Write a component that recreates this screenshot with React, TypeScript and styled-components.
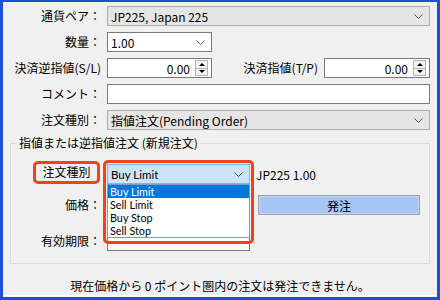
import styled, { createGlobalStyle } from 'styled-components';

const GlobalStyle = createGlobalStyle`
  html, body {
    margin: 0;
    padding: 0;
    background: #ffffff;
  }
  body {
    font-family: "Noto Sans CJK JP", "Noto Sans", sans-serif;
    font-size: 12px;
    color: #000;
  }
`;

const orderTypes = ['Buy Limit', 'Sell Limit', 'Buy Stop', 'Sell Stop'];

function Chevron() {
  return (
    <svg width="9" height="5" viewBox="0 0 9 5">
      <polyline points="0.5,0.5 4.5,4.5 8.5,0.5" fill="none" stroke="#5c5c5c" strokeWidth="1" />
    </svg>
  );
}

function SpinBox({ value, width }: { value: string; width: number }) {
  return (
    <StyledSpinBox $width={width}>
      <span>{value}</span>
      <StyledSpinButtons>
        <StyledSpinHalf>
          <StyledArrowUp />
        </StyledSpinHalf>
        <StyledSpinHalf>
          <StyledArrowDown />
        </StyledSpinHalf>
      </StyledSpinButtons>
    </StyledSpinBox>
  );
}

function App() {
  return (
    <>
      <GlobalStyle />
      <StyledWindow>
        <StyledForm>
          <StyledRow>
            <StyledLabel>通貨ペア：</StyledLabel>
            <StyledCombo $width={323} $readOnly>
              <span>JP225, Japan 225</span>
              <Chevron />
            </StyledCombo>
          </StyledRow>
          <StyledRow>
            <StyledLabel>数量：</StyledLabel>
            <StyledCombo $width={105}>
              <span>1.00</span>
              <Chevron />
            </StyledCombo>
          </StyledRow>
          <StyledRow>
            <StyledLabel>決済逆指値(S/L)</StyledLabel>
            <SpinBox value="0.00" width={105} />
            <StyledLabel $width={100}>決済指値(T/P)</StyledLabel>
            <SpinBox value="0.00" width={106} />
          </StyledRow>
          <StyledRow>
            <StyledLabel>コメント：</StyledLabel>
            <StyledField $width={323} />
          </StyledRow>
          <StyledRow>
            <StyledLabel>注文種別：</StyledLabel>
            <StyledCombo $width={323} $readOnly>
              <span>指値注文(Pending Order)</span>
              <Chevron />
            </StyledCombo>
          </StyledRow>
        </StyledForm>

        <StyledGroup>
          <StyledLegend>指値または逆指値注文 (新規注文)</StyledLegend>
          <StyledGroupRows>
            <StyledRow>
              <StyledLabel $width={90}>
                <StyledHighlight>注文種別</StyledHighlight>
              </StyledLabel>
              <StyledComboAnchor>
                <StyledCombo $width={143} $open>
                  <span>Buy Limit</span>
                  <Chevron />
                </StyledCombo>
                <StyledDropList>
                  {orderTypes.map((type, i) => (
                    <StyledDropItem key={type} $selected={i === 0}>
                      {type}
                    </StyledDropItem>
                  ))}
                </StyledDropList>
                <StyledAnnotation />
              </StyledComboAnchor>
              <StyledInfo>JP225 1.00</StyledInfo>
            </StyledRow>
            <StyledRow>
              <StyledLabel $width={90}>価格：</StyledLabel>
              <StyledField $width={143} />
              <StyledOrderButton>発注</StyledOrderButton>
            </StyledRow>
            <StyledRow $offset={5}>
              <StyledLabel $width={90}>有効期限：</StyledLabel>
              <StyledField $width={143} />
            </StyledRow>
          </StyledGroupRows>
        </StyledGroup>

        <StyledNote>現在価格から 0 ポイント圏内の注文は発注できません。</StyledNote>
      </StyledWindow>
    </>
  );
}

const StyledWindow = styled.div`
  width: 440px;
  height: 300px;
  box-sizing: border-box;
  border-style: solid;
  border-color: #1f4fd6;
  border-width: 2px 3px 3px 3px;
  background-color: #f0f0f0;
  box-shadow: inset 0 -2px 0 #ffffff;
  display: flex;
  flex-direction: column;
`;

const StyledForm = styled.div`
  display: flex;
  flex-direction: column;
  gap: 6px;
  padding-top: 4px;
`;

const StyledRow = styled.div<{ $offset?: number }>`
  display: flex;
  align-items: center;
  gap: 6px;
  height: 20px;
  margin-top: ${({ $offset }) => $offset ?? 0}px;
`;

const StyledLabel = styled.div<{ $width?: number }>`
  width: ${({ $width }) => $width ?? 98}px;
  flex-shrink: 0;
  display: flex;
  justify-content: flex-end;
  align-items: center;
  white-space: nowrap;
  line-height: 16px;
`;

const StyledField = styled.div<{ $width: number }>`
  width: ${({ $width }) => $width}px;
  height: 20px;
  box-sizing: border-box;
  flex-shrink: 0;
  border: 1px solid #7a7a7a;
  background-color: #ffffff;
`;

const StyledCombo = styled.div<{ $width: number; $readOnly?: boolean; $open?: boolean }>`
  width: ${({ $width }) => $width}px;
  height: 20px;
  box-sizing: border-box;
  flex-shrink: 0;
  display: flex;
  align-items: center;
  justify-content: space-between;
  padding: 0 6px 0 3px;
  font-family: ${({ $open }) =>
    $open ? 'Lato, "Noto Sans", sans-serif' : '"Noto Sans CJK JP", "Noto Sans", sans-serif'};
  font-size: ${({ $open }) => ($open ? 11.5 : 12)}px;
  border: 1px solid
    ${({ $readOnly, $open }) => ($open ? '#7eb4ea' : $readOnly ? '#adadad' : '#7a7a7a')};
  background-color: ${({ $readOnly, $open }) =>
    $open ? '#cce4f7' : $readOnly ? '#e5e5e5' : '#ffffff'};
  white-space: nowrap;
`;

const StyledSpinBox = styled.div<{ $width: number }>`
  width: ${({ $width }) => $width}px;
  height: 20px;
  box-sizing: border-box;
  flex-shrink: 0;
  display: flex;
  align-items: center;
  justify-content: flex-end;
  gap: 5px;
  padding-right: 3px;
  border: 1px solid #7a7a7a;
  background-color: #ffffff;
`;

const StyledSpinButtons = styled.div`
  width: 13px;
  height: 16px;
  box-sizing: border-box;
  border: 1px solid #b4b4b4;
  display: flex;
  flex-direction: column;
  background-color: #f2f2f2;
`;

const StyledSpinHalf = styled.div`
  flex: 1;
  display: flex;
  align-items: center;
  justify-content: center;
  & + & {
    border-top: 1px solid #b4b4b4;
  }
`;

const StyledArrowUp = styled.div`
  width: 0;
  height: 0;
  border-left: 3px solid transparent;
  border-right: 3px solid transparent;
  border-bottom: 3px solid #000;
`;

const StyledArrowDown = styled.div`
  width: 0;
  height: 0;
  border-left: 3px solid transparent;
  border-right: 3px solid transparent;
  border-top: 3px solid #000;
`;

const StyledGroup = styled.fieldset`
  margin: 5px 7px 0 7px;
  padding: 0 0 12px 0;
  border: 1px solid #dcdcdc;
  min-width: 0;
`;

const StyledLegend = styled.legend`
  margin-left: 6px;
  padding: 0 2px;
  line-height: 16px;
`;

const StyledGroupRows = styled.div`
  display: flex;
  flex-direction: column;
  gap: 11px;
  padding-top: 13px;
`;

const StyledHighlight = styled.span`
  width: 67px;
  height: 23px;
  box-sizing: border-box;
  display: flex;
  align-items: center;
  justify-content: center;
  border: 3px solid #f4401f;
  border-radius: 5px;
  margin-right: 1px;
  margin-top: -4px;
`;

const StyledComboAnchor = styled.div`
  position: relative;
  width: 143px;
  height: 20px;
  flex-shrink: 0;
`;

const StyledDropList = styled.div`
  position: absolute;
  top: 20px;
  left: 0;
  width: 143px;
  box-sizing: border-box;
  border: 1px solid #7a9cc6;
  background-color: #ffffff;
  z-index: 1;
`;

const StyledDropItem = styled.div<{ $selected?: boolean }>`
  height: 13px;
  line-height: 13px;
  font-family: Lato, "Noto Sans", sans-serif;
  font-size: 10.8px;
  padding: 0 2px;
  white-space: nowrap;
  overflow: hidden;
  background-color: ${({ $selected }) => ($selected ? '#0078d7' : 'transparent')};
  color: ${({ $selected }) => ($selected ? '#ffffff' : '#000000')};
`;

const StyledAnnotation = styled.div`
  position: absolute;
  top: -4px;
  left: -4px;
  right: -4px;
  height: 84px;
  box-sizing: border-box;
  border: 3px solid #f4401f;
  border-radius: 5px;
  z-index: 2;
  pointer-events: none;
`;

const StyledInfo = styled.span`
  white-space: nowrap;
`;

const StyledOrderButton = styled.button`
  width: 162px;
  height: 20px;
  margin-left: 2px;
  padding: 0;
  box-sizing: border-box;
  font: inherit;
  color: #000;
  border: 1px solid #a0a0a0;
  background-color: #a6c4f6;
  box-shadow: inset 0 0 0 1px #c3d6f5;
`;

const StyledNote = styled.div`
  margin-top: 14px;
  text-align: center;
  line-height: 16px;
  white-space: nowrap;
`;

export default App;
